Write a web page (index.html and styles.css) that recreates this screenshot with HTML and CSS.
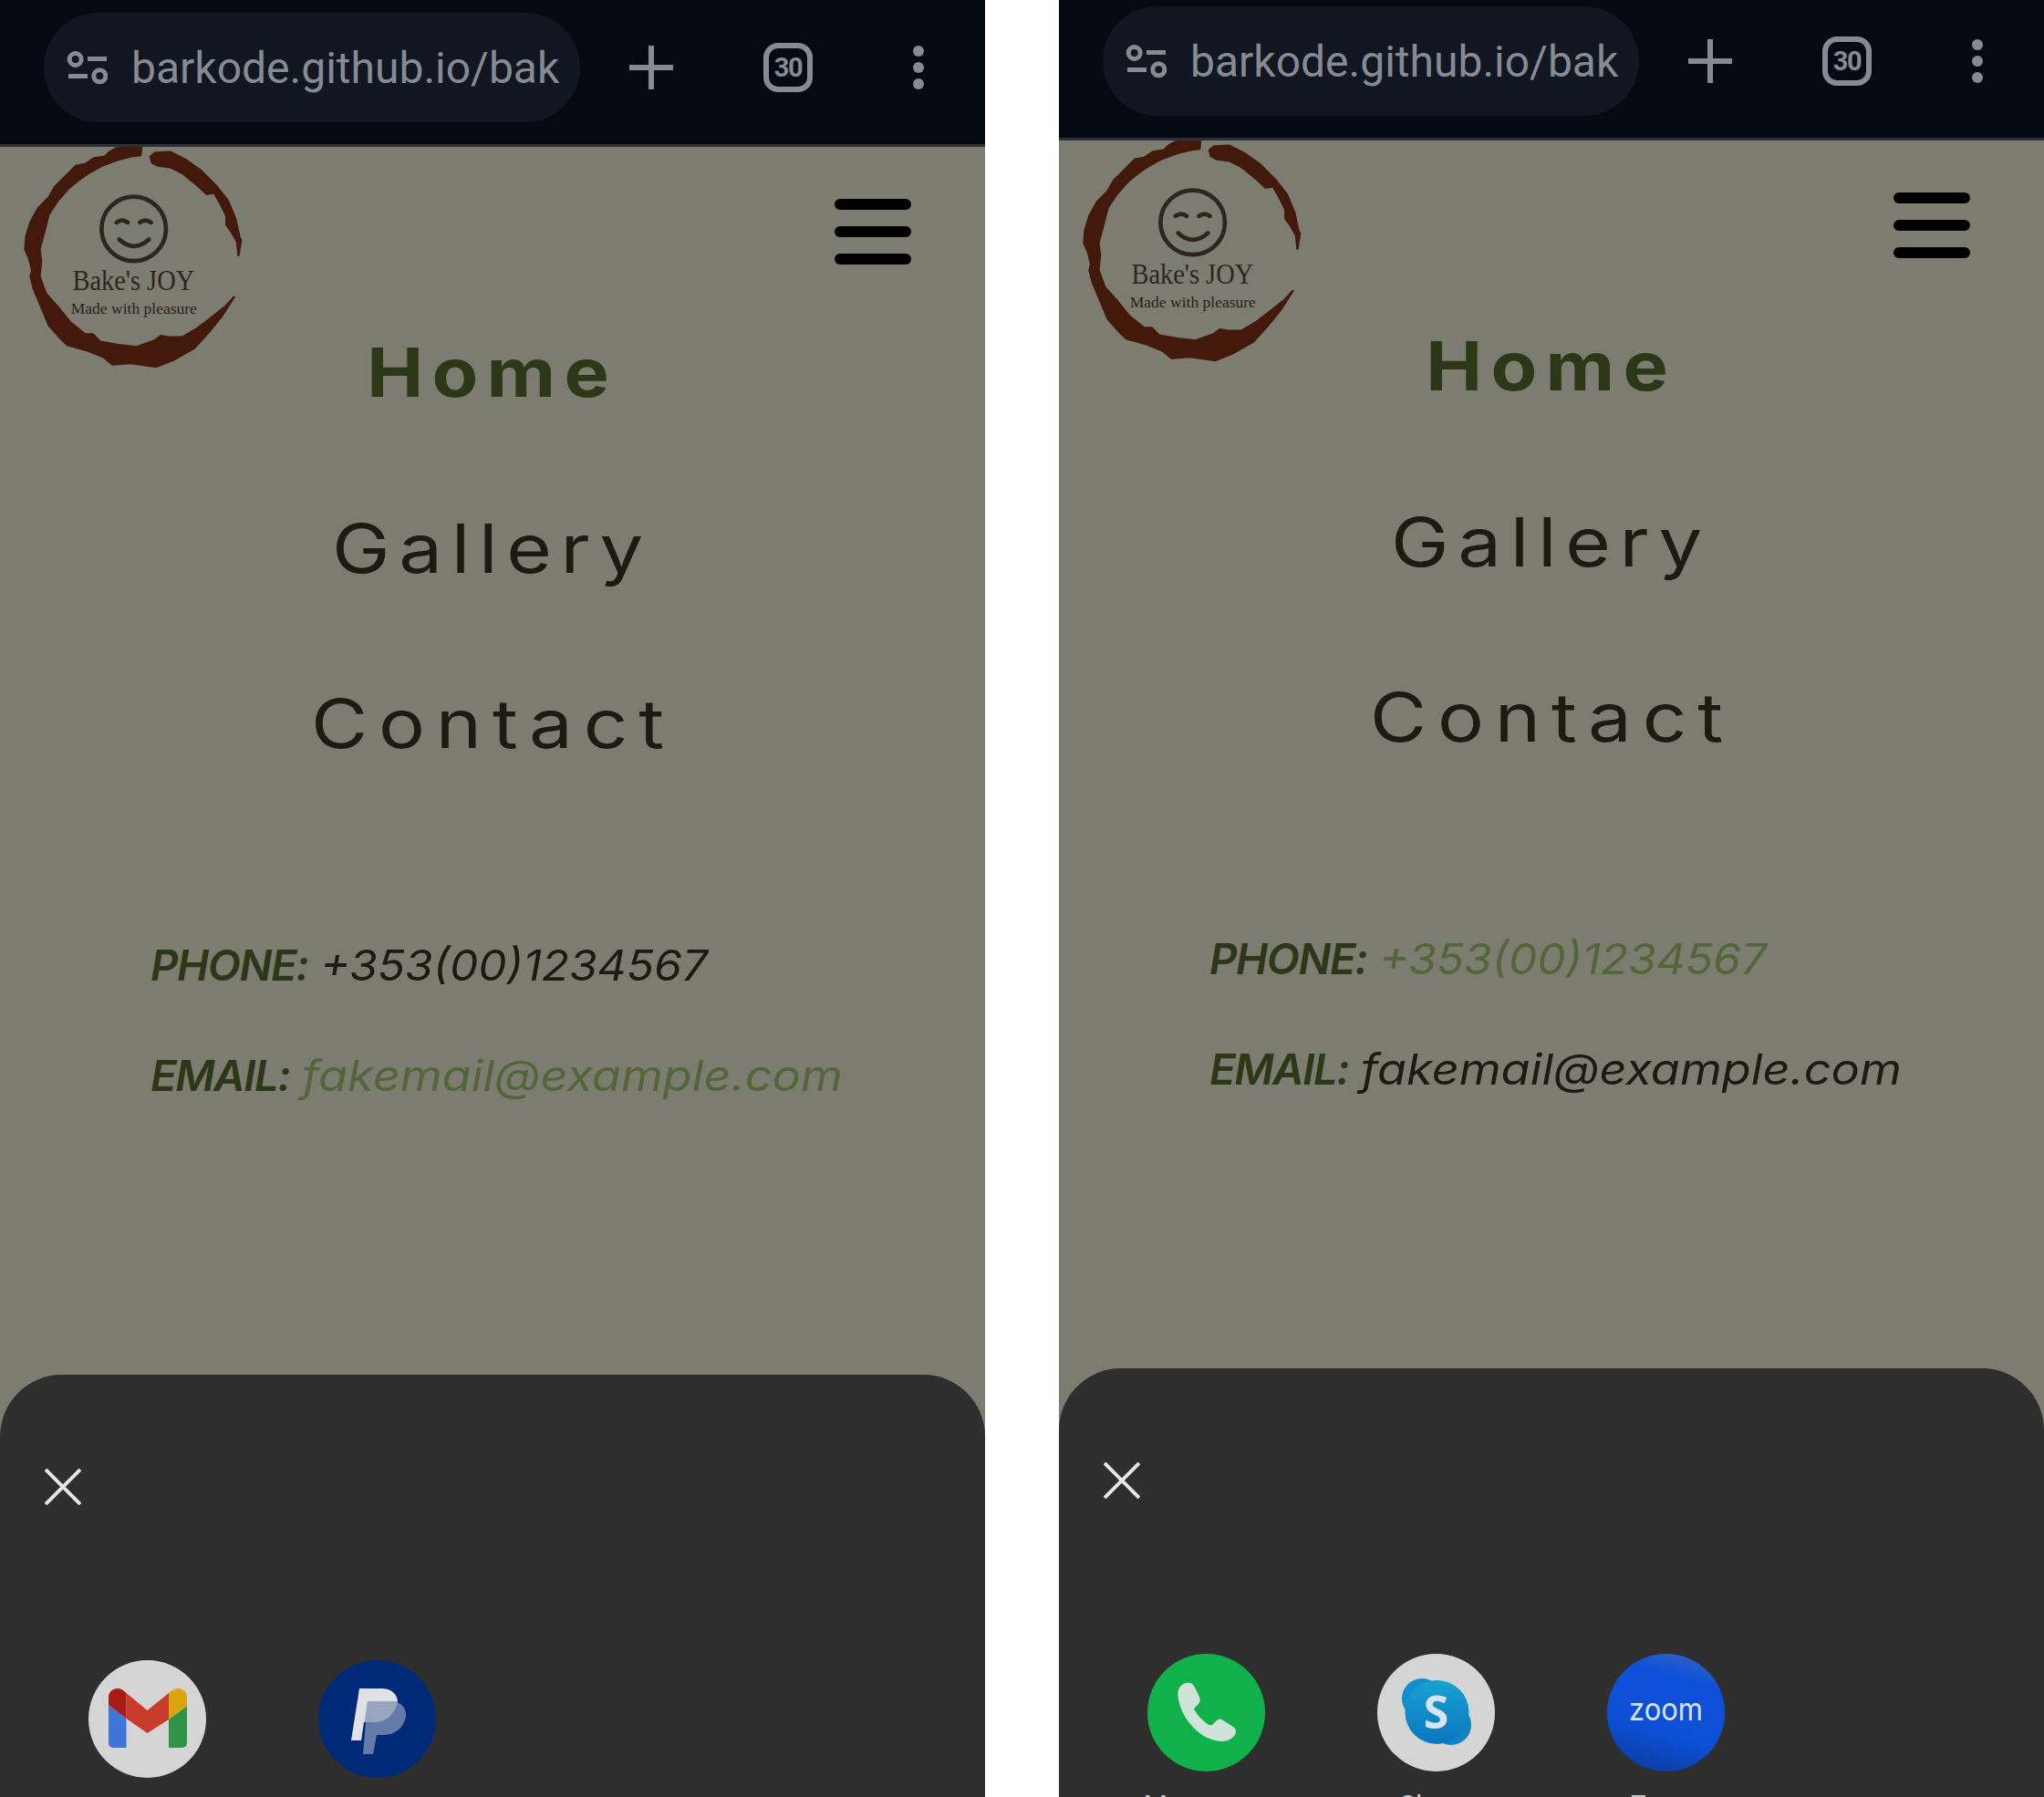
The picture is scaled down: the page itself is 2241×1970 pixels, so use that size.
FILE: index.html
```html
<!DOCTYPE html>
<html lang="en">
<head>
<meta charset="utf-8">
<title>Bake's JOY</title>
<link rel="stylesheet" href="styles.css">
</head>
<body>
<svg class="defs" aria-hidden="true">
  <defs>
    <symbol id="logo" viewBox="60 63 750 730">
      <path class="ring" d="M465 65L420 63L380 68L360 80L345 95L310 100L280 120L250 125L215 160L180 195L160 230L125 265L100 310L85 360L82 400L95 430L105 470L100 490L110 530L135 590L160 650L200 695L220 715L290 735L340 755L370 780L430 775L515 787L570 765L640 725L690 670L730 620L770 558L740 590L690 630L650 660L600 690L555 690L530 685L510 700L450 722L390 715L330 705L305 680L280 680L230 640L190 590L150 545L130 490L135 440L130 400L150 325L160 285L190 240L225 200L255 175L290 150L335 125L390 105L440 93L463 90Z"/>
      <path class="ring" d="M495 95L510 82L560 80L610 105L660 140L710 190L750 240L775 300L788 360L793 370L785 420L780 375L760 340L745 320L745 290L725 250L705 215L680 218L650 190L600 150L560 130L520 125L500 115Z"/>
      <circle class="face" cx="440" cy="333" r="106"/>
      <path class="face" d="M383 312Q402 298 420 312M460 312Q478 298 497 312"/>
      <path class="face" d="M392 368Q440 412 490 368"/>
      <text class="logo-title" x="238" y="535" textLength="402" lengthAdjust="spacingAndGlyphs">Bake's JOY</text>
      <text class="logo-sub" x="233" y="612" textLength="415" lengthAdjust="spacingAndGlyphs">Made with pleasure</text>
    </symbol>
    <symbol id="tune" viewBox="0 0 46 44">
      <circle cx="10.7" cy="13" r="6.5"/>
      <circle cx="37.3" cy="31.3" r="6.5"/>
      <path d="M24 12.5H45M3 31.5H24"/>
    </symbol>
    <linearGradient id="skype-main" x1="0" y1="0" x2="0" y2="1">
      <stop offset="0" stop-color="#17a2d2"/>
      <stop offset="1" stop-color="#0a76bd"/>
    </linearGradient>
    <linearGradient id="zoom-main" x1="0.75" y1="0" x2="0.45" y2="1">
      <stop offset="0" stop-color="#3263c4"/>
      <stop offset="0.22" stop-color="#0f50d8"/>
      <stop offset="0.7" stop-color="#0c4fd4"/>
      <stop offset="1" stop-color="#0a3fa8"/>
    </linearGradient>
  </defs>
</svg>

<main class="screens">

  <section class="phone">
    <header class="toolbar">
      <div class="pill">
        <svg class="tune"><use href="#tune"/></svg>
        <span class="url">barkode.github.io/bak</span>
      </div>
      <span class="plus"></span>
      <span class="tabs">30</span>
      <span class="dots"><i></i><i></i><i></i></span>
    </header>
    <div class="page">
      <div class="site-head">
        <svg class="logo" role="img" aria-label="Bake's JOY"><use href="#logo"/></svg>
        <div class="burger"><i></i><i></i><i></i></div>
      </div>
      <nav class="nav">
        <a class="nav-link nav-home">Home</a>
        <a class="nav-link nav-gallery">Gallery</a>
        <a class="nav-link nav-contact">Contact</a>
      </nav>
      <div class="contact">
        <p class="line"><b>PHONE:</b> <span class="num">+353(00)1234567</span></p>
        <p class="line"><b>EMAIL:</b> <span class="mail visited">fakemail@example.com</span></p>
      </div>
    </div>
    <aside class="sheet">
      <svg class="close" viewBox="0 0 40 40"><path d="M1 1L39 39M39 1L1 39"/></svg>
      <div class="apps">
        <div class="app">
          <svg class="app-icon" viewBox="0 0 129 129">
            <circle cx="64.5" cy="64.5" r="64.5" fill="#d5d5d5"/>
            <path fill="#3d76d6" d="M22 49L41.5 64V96H27a5 5 0 0 1-5-5Z"/>
            <path fill="#2f9449" d="M88 65L108 50V91a5 5 0 0 1-5 5H88Z"/>
            <path fill="#c93b2a" d="M41.5 36L64.5 55L88 36V65L64.5 80L41.5 64Z"/>
            <path fill="#a61c14" d="M22 41a10 10 0 0 1 16-8l3.500 3V64L22 49Z"/>
            <path fill="#dba50f" d="M88 36l4-3a10 10 0 0 1 16 8V50L88 65Z"/>
          </svg>
          <span class="app-name">Gmail</span>
        </div>
        <div class="app">
          <svg class="app-icon" viewBox="0 0 129 129">
            <circle cx="64.5" cy="64.5" r="64.5" fill="#002a78"/>
            <path fill="#e0e1e4" d="M45 31H70C82 31 88 40 87 48C85 62 74 68 62 68H50L47 88H36Z"/>
            <path fill="#657aa8" d="M54 45H80C90 45 97 52 96 62C94 73 85 82 72 82H64L60 103H49Z"/>
            <path fill="#9aa6c0" d="M54 45H87C84 60 74 68 62 68H50.500Z"/>
          </svg>
          <span class="app-name">PayPal</span>
        </div>
      </div>
    </aside>
  </section>

  <section class="phone phone-raised">
    <header class="toolbar">
      <div class="pill">
        <svg class="tune"><use href="#tune"/></svg>
        <span class="url">barkode.github.io/bak</span>
      </div>
      <span class="plus"></span>
      <span class="tabs">30</span>
      <span class="dots"><i></i><i></i><i></i></span>
    </header>
    <div class="page">
      <div class="site-head">
        <svg class="logo" role="img" aria-label="Bake's JOY"><use href="#logo"/></svg>
        <div class="burger"><i></i><i></i><i></i></div>
      </div>
      <nav class="nav">
        <a class="nav-link nav-home">Home</a>
        <a class="nav-link nav-gallery">Gallery</a>
        <a class="nav-link nav-contact">Contact</a>
      </nav>
      <div class="contact">
        <p class="line"><b>PHONE:</b> <span class="num visited">+353(00)1234567</span></p>
        <p class="line"><b>EMAIL:</b> <span class="mail">fakemail@example.com</span></p>
      </div>
    </div>
    <aside class="sheet">
      <svg class="close" viewBox="0 0 40 40"><path d="M1 1L39 39M39 1L1 39"/></svg>
      <div class="apps">
        <div class="app">
          <svg class="app-icon" viewBox="0 0 129 129">
            <circle cx="64.5" cy="64.5" r="64.5" fill="#10b04a"/>
            <path fill="#cfe3d8" d="M42 32C36 34 33 38 33.500 46C35 62 44 76 56 86C66 94 80 98 88 95C93 93 97 89 97 85C97 83 96 81 94 80L83 73C80 71 78 71 76 73L71 78C68 79 65 77 61 73C55 68 52 62 51 60L56 55C58 53 58 50 57 47L51 35C49 32 46 31 42 32Z"/>
          </svg>
          <span class="app-name">Messages</span>
        </div>
        <div class="app">
          <svg class="app-icon" viewBox="0 0 129 129">
            <circle cx="64.5" cy="64.5" r="64.5" fill="#d5d5d5"/>
            <circle cx="49" cy="49" r="22" fill="#0f8fcb"/>
            <circle cx="81" cy="78" r="22" fill="#0f82c4"/>
            <circle cx="65.500" cy="64" r="35" fill="url(#skype-main)"/>
            <text class="skype-s" x="64.500" y="82">S</text>
          </svg>
          <span class="app-name">Skype</span>
        </div>
        <div class="app">
          <svg class="app-icon" viewBox="0 0 129 129">
            <circle cx="64.5" cy="64.5" r="64.5" fill="url(#zoom-main)"/>
            <text class="zoom-word" x="64.500" y="73" textLength="81" lengthAdjust="spacingAndGlyphs">zoom</text>
          </svg>
          <span class="app-name">Zoom</span>
        </div>
      </div>
    </aside>
  </section>

</main>
</body>
</html>
```

FILE: styles.css
```css
* { box-sizing: border-box; }

html, body {
  margin: 0;
  height: 1970px;
  overflow: hidden;
  background: #fff;
}

.defs { position: absolute; width: 0; height: 0; }

.screens {
  display: flex;
  gap: 81px;
  width: 2241px;
}

.phone {
  flex: none;
  display: flex;
  flex-direction: column;
  width: 1080px;
  height: 1977px;
  overflow: hidden;
  background: #7c7c70;
}

.phone-raised { margin-top: -7px; }

/* browser toolbar */
.toolbar {
  flex: none;
  display: flex;
  align-items: center;
  height: 161px;
  padding: 14px 0 24px 48px;
  background: #050911;
  border-bottom: 3px solid #2c3036;
}

.pill {
  flex: none;
  display: flex;
  align-items: center;
  width: 588px;
  height: 120px;
  padding-left: 24px;
  border-radius: 60px;
  background: #101720;
}

.tune {
  flex: none;
  width: 46px;
  height: 44px;
  margin-right: 26px;
  fill: none;
  stroke: #868a93;
  stroke-width: 5;
}

.url {
  padding-top: 2px;
  font: 400 48px/60px Roboto, sans-serif;
  color: #868a93;
  white-space: nowrap;
}

.plus {
  flex: none;
  width: 48px;
  height: 48px;
  margin-left: 54px;
  background:
    linear-gradient(#868a93, #868a93) center / 6px 48px no-repeat,
    linear-gradient(#868a93, #868a93) center / 48px 6px no-repeat;
  border-radius: 3px;
}

.tabs {
  flex: none;
  display: flex;
  align-items: center;
  justify-content: center;
  width: 54px;
  height: 54px;
  margin-left: 99px;
  border: 6px solid #868a93;
  border-radius: 16px;
  font: 700 29px/1 Roboto, sans-serif;
  letter-spacing: -1.5px;
  color: #868a93;
}

.dots {
  flex: none;
  display: flex;
  flex-direction: column;
  gap: 6px;
  margin-left: 110px;
}

.dots i {
  display: block;
  width: 12px;
  height: 12px;
  border-radius: 50%;
  background: #868a93;
}

/* site */
.page {
  flex: none;
  height: 1346px;
}

.site-head {
  display: flex;
  justify-content: space-between;
  align-items: flex-start;
  height: 151px;
  padding: 0 81px 0 20px;
}

.logo {
  flex: none;
  width: 250px;
  height: 243px;
}

.ring {
  fill: #42190a;
  stroke: #42190a;
  stroke-width: 7;
  stroke-linejoin: round;
}

.face {
  fill: none;
  stroke: #2f2520;
  stroke-width: 14;
  stroke-linecap: round;
}

.logo-title {
  font: 400 98px "Liberation Serif", serif;
  fill: #2f2520;
}

.logo-sub {
  font: 400 52px "Liberation Serif", serif;
  fill: #2a1f1a;
}

.burger {
  display: flex;
  flex-direction: column;
  gap: 18px;
  width: 84px;
  margin-top: 57px;
}

.burger i {
  display: block;
  height: 12px;
  border-radius: 6px;
  background: #000;
}

.nav {
  display: flex;
  flex-direction: column;
  align-items: center;
}

.nav-link {
  font: 400 74px/192.5px Inter, sans-serif;
  color: #1d1a12;
  white-space: nowrap;
}

.nav-home {
  font-weight: 700;
  letter-spacing: 8.3px;
  color: #2c3718;
  transform: scaleX(1.12);
}

.nav-gallery {
  letter-spacing: 8.4px;
  transform: scaleX(1.15);
}

.nav-contact {
  letter-spacing: 10.3px;
  transform: scaleX(1.15);
}

.contact {
  margin-top: 107px;
  padding-left: 165px;
}

.line {
  margin: 0;
  font: italic 400 47px/121px Inter, sans-serif;
  color: #1d1a12;
  white-space: nowrap;
}

.line b {
  font-weight: 600;
  letter-spacing: -1.3px;
  color: #2c3718;
}

.num,
.mail {
  display: inline-block;
  transform-origin: left center;
}

.num { transform: scaleX(1.057); }

.mail { transform: scaleX(1.113); }

.line .visited { color: #53663a; }

/* bottom sheet */
.sheet {
  flex: none;
  height: 470px;
  padding: 103px 0 0 49px;
  border-radius: 68px 68px 0 0;
  background: #2e2e2e;
}

.close {
  display: block;
  width: 40px;
  height: 40px;
  fill: none;
  stroke: #e6e6e6;
  stroke-width: 4;
}

.apps {
  display: flex;
  gap: 123px;
  margin: 170px 0 0 48px;
}

.app {
  flex: none;
  display: flex;
  flex-direction: column;
  align-items: center;
  width: 129px;
}

.app-icon {
  display: block;
  flex: none;
  width: 129px;
  height: 129px;
}

.app-name {
  margin-top: 19px;
  font: 400 30px/36px Roboto, sans-serif;
  color: #c8c8c8;
  white-space: nowrap;
}

.skype-s {
  font: 700 50px "Open Sans", sans-serif;
  fill: #d8e4ee;
  text-anchor: middle;
}

.zoom-word {
  font: 400 34px Inter, sans-serif;
  fill: #dbe2f5;
  text-anchor: middle;
}
```
